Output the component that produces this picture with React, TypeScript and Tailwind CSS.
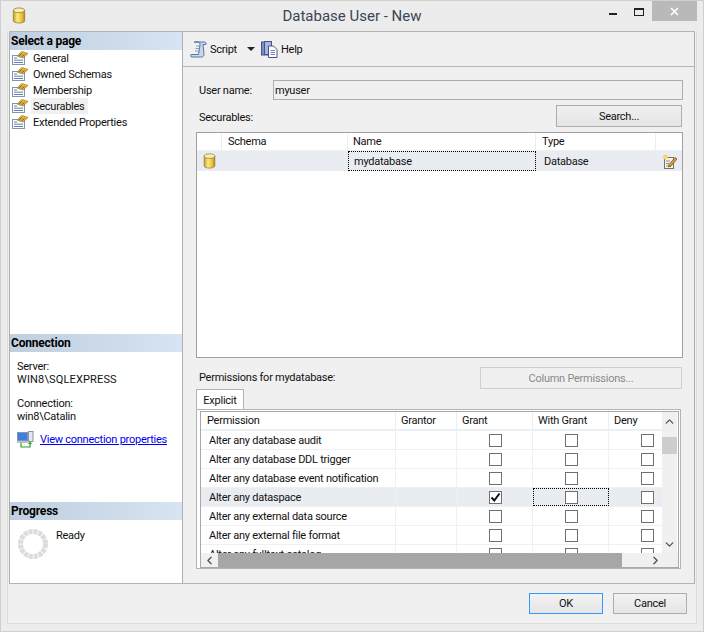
import { ChevronDown, ChevronLeft, ChevronRight, ChevronUp } from 'lucide-react'

const pages = ['General', 'Owned Schemas', 'Membership', 'Securables', 'Extended Properties']

const permissions = [
  { name: 'Alter any database audit' },
  { name: 'Alter any database DDL trigger' },
  { name: 'Alter any database event notification' },
  { name: 'Alter any dataspace', selected: true },
  { name: 'Alter any external data source' },
  { name: 'Alter any external file format' },
  { name: 'Alter any fulltext catalog' },
]

function DbIcon({ className }: { className: string }) {
  return (
    <svg viewBox="0 0 14 18" className={className}>
      <defs>
        <linearGradient id="dbBody" x1="0" x2="1" y1="0" y2="0">
          <stop offset="0" stopColor="#c99a1c" />
          <stop offset="0.35" stopColor="#fbe88a" />
          <stop offset="0.75" stopColor="#eebf35" />
          <stop offset="1" stopColor="#b58a1a" />
        </linearGradient>
      </defs>
      <path d="M1 3.500v11c0 1.400 2.700 2.500 6 2.500s6-1.100 6-2.500v-11z" fill="url(#dbBody)" stroke="#8d7a3a" strokeWidth="0.8" />
      <ellipse cx="7" cy="3.500" rx="6" ry="2.500" fill="#fbeea8" stroke="#8d7a3a" strokeWidth="0.8" />
    </svg>
  )
}

function PageIcon() {
  return (
    <svg viewBox="0 0 16 14" className="w-4 h-[14px] shrink-0">
      <rect x="0.500" y="4.500" width="12" height="9" fill="#fff" stroke="#8a93a3" />
      <path d="M2 7h3M2 9.200h9M2 11.500h9" stroke="#5c7fb8" strokeWidth="1" />
      <path d="M5 5l5-4.500 6 2-5 4.500z" fill="#e8b92f" stroke="#7a6a3a" strokeWidth="0.6" />
      <path d="M7 5l3-2.500M9.500 6l3-2.500" stroke="#4a4a3a" strokeWidth="0.8" />
    </svg>
  )
}

function ScriptIcon() {
  return (
    <svg viewBox="0 0 17 17" className="w-[17px] h-[17px]">
      <path d="M4 1h10.500c1.200 0 2 1.200 1.500 2.500h-3L14 13c0 2-1 3-2.500 3H2c-1.500 0-2-1.500-1-2.500h7.500L10 4c.2-1.500-.5-3-2-3z" fill="#c9d6ea" stroke="#4a6a9c" strokeWidth="0.9" />
      <path d="M6 5h4M5.500 7.500h4M5 10h4" stroke="#6d89b4" strokeWidth="0.8" />
    </svg>
  )
}

function HelpIcon() {
  return (
    <svg viewBox="0 0 17 17" className="w-[17px] h-[17px]">
      <rect x="0.500" y="1" width="8" height="13" fill="#7d8ec6" stroke="#44548f" />
      <rect x="3.500" y="0.500" width="7" height="13" fill="#a7b4de" stroke="#44548f" />
      <path d="M7.500 5h5l3.500 3.500v8h-8.500z" fill="#fff" stroke="#44548f" />
      <path d="M9.500 9.500h4.500M9.500 11.500h4.500M9.500 13.500h4.500" stroke="#6d7fb8" />
    </svg>
  )
}

function EditIcon() {
  return (
    <svg viewBox="0 0 15 15" className="w-[15px] h-[15px]">
      <rect x="2.500" y="3.500" width="9" height="11" fill="#f7f3e3" stroke="#77725f" />
      <path d="M4 7h4M4 9.500h3M4 12h5" stroke="#7a8fb0" />
      <circle cx="3.500" cy="3" r="2.500" fill="#f5d774" />
      <path d="M7 10.500l6-7 2 1.500-6 7-2.500 1z" fill="#d9a02c" stroke="#5c4a22" strokeWidth="0.7" />
    </svg>
  )
}

function ConnectionIcon() {
  return (
    <svg viewBox="0 0 17 17" className="w-[17px] h-[17px] shrink-0">
      <rect x="0.500" y="1.500" width="10" height="8" fill="#3f7fe0" stroke="#8a94a8" />
      <rect x="0" y="10" width="11" height="2" fill="#b9c0cc" />
      <rect x="11.500" y="0.500" width="4.500" height="10" fill="#e4e7ee" stroke="#8a94a8" />
      <path d="M4 12v4h9v-4" fill="none" stroke="#2e9e2e" strokeWidth="1.200" />
      <path d="M13 10.500l-2.200 2.500h4.400z" fill="#2e9e2e" />
    </svg>
  )
}

function Spinner() {
  return (
    <svg viewBox="0 0 30 30" className="w-[30px] h-[30px] shrink-0">
      <circle cx="15" cy="15" r="12.500" fill="none" stroke="#dcdcdc" strokeWidth="5" strokeDasharray="4.100 0.810" />
    </svg>
  )
}

function SectionHeader({ title }: { title: string }) {
  return (
    <div className="h-[18px] pl-[1px] flex items-center bg-gradient-to-r from-[#bfcfdf] to-[#d7e4f1] text-[12px] font-bold text-black leading-none tracking-[-0.2px]">
      {title}
    </div>
  )
}

function Checkbox({ checked }: { checked?: boolean }) {
  return (
    <div className="w-[13px] h-[13px] border border-[#707070] bg-white flex items-center justify-center shrink-0">
      {checked && (
        <svg viewBox="0 0 11 11" className="w-[11px] h-[11px]">
          <path d="M1.500 5.500l2.800 3L9.500 1.500" fill="none" stroke="#111" strokeWidth="2" />
        </svg>
      )}
    </div>
  )
}

function GridHeader({ label, className }: { label: string; className: string }) {
  return <div className={`border-r border-[#e8eef5] h-full flex items-center shrink-0 ${className}`}>{label}</div>
}

export default function App() {
  return (
    <div
      className="w-[704px] h-[632px] bg-[#ececec] border border-[#cfcfcf] flex flex-col overflow-hidden text-[11px] text-[#111] leading-none tracking-[-0.25px]"
      style={{ fontFamily: 'Roboto, "Liberation Sans", sans-serif' }}
    >
      {/* Title bar */}
      <div className="h-[30px] shrink-0 flex pl-[11px] text-[#3a4654]">
        <div className="w-[189px] pt-[6px]">
          <DbIcon className="w-[14px] h-[17px]" />
        </div>
        <div className="flex-1 text-center text-[15px] pt-[8px] tracking-normal">Database User - New</div>
        <div className="w-[200px] flex justify-end items-start">
          <div className="w-[8px] h-[2px] bg-[#222] mt-[12px] mr-[17px]" />
          <div className="w-[10px] h-[8px] border border-[#222] border-t-2 mt-[7px] mr-[8px]" />
          <div className="w-[45px] h-[20px] bg-[#b9b9b9] flex items-center justify-center text-white mr-[6px]">
            <svg viewBox="0 0 9 9" className="w-[9px] h-[9px]">
              <path d="M1 1l7 7M8 1l-7 7" stroke="#fff" strokeWidth="1.600" />
            </svg>
          </div>
        </div>
      </div>

      {/* Main panels */}
      <div className="mx-[6px] border-l border-r border-[#dcdcdc] flex-1 flex flex-col bg-[#f0f0f0] border-b">
        <div className="flex h-[553px] border-t border-b border-[#b4b4b4] mx-px">
          {/* Left pane */}
          <div className="w-[174px] shrink-0 bg-white border-l border-r border-[#adadb4] flex flex-col">
            <div className="h-[302px] shrink-0">
              <SectionHeader title="Select a page" />
              <div className="pl-[2px] flex flex-col">
                {pages.map((page) => (
                  <div key={page} className="h-[16px] flex items-center gap-[3px]">
                    <PageIcon />
                    <span className={page === 'Securables' ? 'bg-[#f0f0f0] px-[2px] h-[16px] flex items-center w-[57px]' : 'px-[2px]'}>{page}</span>
                  </div>
                ))}
              </div>
            </div>
            <div className="h-[168px] shrink-0">
              <SectionHeader title="Connection" />
              <div className="pl-[7px] pt-[8px] flex flex-col">
                <div className="h-[13px] flex items-center">Server:</div>
                <div className="h-[13px] flex items-center tracking-[0.15px]">WIN8\SQLEXPRESS</div>
                <div className="h-[13px] mt-[11px] flex items-center">Connection:</div>
                <div className="h-[13px] flex items-center">win8\Catalin</div>
                <div className="mt-[8px] flex items-center gap-[6px]">
                  <ConnectionIcon />
                  <span className="text-[#0000ee] underline whitespace-nowrap">View connection properties</span>
                </div>
              </div>
            </div>
            <div className="flex-1">
              <SectionHeader title="Progress" />
              <div className="pl-[8px] pt-[9px] flex gap-[8px]">
                <Spinner />
                <span className="leading-[13px]">Ready</span>
              </div>
            </div>
          </div>

          {/* Right pane */}
          <div className="flex-1 flex flex-col min-w-0 border-r border-[#adadb4]">
            <div className="h-[35px] shrink-0 border-b border-[#b4b4b4] flex items-center pl-[7px]">
              <ScriptIcon />
              <span className="ml-[3px]">Script</span>
              <div className="ml-[10px] w-0 h-0 border-l-[4px] border-r-[4px] border-t-[4px] border-l-transparent border-r-transparent border-t-[#222]" />
              <div className="ml-[6px]"><HelpIcon /></div>
              <span className="ml-[3px]">Help</span>
            </div>

            <div className="pl-[13px] flex-1 flex flex-col">
              <div className="flex items-center mt-[13px] h-[20px] pl-[3px]">
                <span className="w-[74px]">User name:</span>
                <div className="w-[410px] h-[20px] border border-[#adadad] bg-[#f0f0f0] flex items-center pl-[1px]">myuser</div>
              </div>
              <div className="flex items-center justify-between mt-[5px] h-[22px] w-[486px] pl-[3px]">
                <span className="mt-[3px]">Securables:</span>
                <div className="w-[126px] h-[22px] border border-[#adadad] bg-gradient-to-b from-[#f0f0f0] to-[#e5e5e5] flex items-center justify-center">Search...</div>
              </div>

              {/* Securables grid */}
              <div className="mt-[5px] w-[487px] h-[226px] border border-[#a0a0a0] bg-white">
                <div className="h-[17px] flex items-center">
                  <GridHeader label="" className="w-[25px]" />
                  <GridHeader label="Schema" className="w-[126px] pl-[6px]" />
                  <GridHeader label="Name" className="w-[188px] pl-[5px]" />
                  <GridHeader label="Type" className="w-[120px] pl-[6px]" />
                </div>
                <div className="h-[21px] flex items-center bg-[#e9edf1] border-t border-[#eef2f6]">
                  <div className="w-[25px] flex justify-center"><DbIcon className="w-[13px] h-[16px]" /></div>
                  <div className="w-[126px]" />
                  <div className="w-[188px] h-[20px] pl-[5px] flex items-center border border-dotted border-black">mydatabase</div>
                  <div className="w-[120px] pl-[8px]">Database</div>
                  <div className="flex-1 flex justify-center"><EditIcon /></div>
                </div>
              </div>

              <div className="flex items-center justify-between mt-[9px] h-[22px] w-[486px]">
                <span className="pl-[3px] -mt-[1px]">Permissions for mydatabase:</span>
                <div className="w-[202px] h-[22px] border border-[#d0d0d0] flex items-center justify-center text-[#8a8a8a]">Column Permissions...</div>
              </div>

              {/* Permissions tab */}
              <div className="w-[48px] h-[21px] border border-b-0 border-[#b4b4b4] bg-white flex items-center justify-center">Explicit</div>
              <div className="w-[485px] h-[160px] -mt-px border border-[#b4b4b4] bg-white pt-[1px] pl-[3px] pr-[1px] pb-[1px]">
                <div className="h-[157px] border border-[#a8a8a8] flex flex-col">
                  <div className="flex flex-1 min-h-0">
                    <div className="w-[461px] overflow-hidden">
                      <div className="h-[19px] flex items-center border-b-2 border-[#ebf0f5]">
                        <GridHeader label="Permission" className="w-[195px] pl-[6px]" />
                        <GridHeader label="Grantor" className="w-[61px] pl-[5px]" />
                        <GridHeader label="Grant" className="w-[76px] pl-[5px]" />
                        <GridHeader label="With Grant" className="w-[76px] pl-[5px]" />
                        <GridHeader label="Deny" className="w-[76px] pl-[5px] border-r-0" />
                      </div>
                      {permissions.map((row) => (
                        <div key={row.name} className={`h-[19px] w-[484px] flex items-center border-b border-[#f0f0f0] ${row.selected ? 'bg-[#e9edf1]' : ''}`}>
                          <div className="w-[195px] pl-[8px] h-full flex items-center border-r border-[#f0f0f0] shrink-0 whitespace-nowrap">{row.name}</div>
                          <div className="w-[61px] h-full border-r border-[#f0f0f0] shrink-0" />
                          <div className="w-[76px] h-full flex items-center justify-center pl-[1px] border-r border-[#f0f0f0] shrink-0">
                            <Checkbox checked={row.selected} />
                          </div>
                          <div className={`w-[76px] h-full flex items-center justify-center pl-[1px] shrink-0 ${row.selected ? 'border border-dotted border-black' : 'border-r border-[#f0f0f0]'}`}>
                            <Checkbox />
                          </div>
                          <div className="w-[76px] h-full flex items-center justify-center shrink-0">
                            <Checkbox />
                          </div>
                        </div>
                      ))}
                    </div>
                    <div className="w-[15px] bg-[#f0f0f0] flex flex-col items-center shrink-0">
                      <ChevronUp size={13} strokeWidth={2.500} className="mt-[3px] text-[#555]" />
                      <div className="w-full h-[17px] bg-[#cdcdcd] mt-[9px]" />
                      <ChevronDown size={13} strokeWidth={2.500} className="mt-auto mb-[2px] text-[#555]" />
                    </div>
                  </div>
                  <div className="h-[14px] shrink-0 bg-[#f0f0f0] flex items-center">
                    <div className="w-[17px] flex justify-center"><ChevronLeft size={13} strokeWidth={2.500} className="text-[#555]" /></div>
                    <div className="w-[404px] h-full bg-[#a6a6a6]" />
                    <div className="w-[44px] flex justify-end pr-[4px]"><ChevronRight size={13} strokeWidth={2.500} className="text-[#555]" /></div>
                  </div>
                </div>
              </div>
            </div>
          </div>
        </div>

        {/* Footer buttons */}
        <div className="flex-1 flex justify-end items-start pt-[9px] pr-[9px] gap-[10px]">
          <div className="w-[74px] h-[21px] border border-[#3399ff] bg-gradient-to-b from-[#f2f2f2] to-[#e5e5e5] flex items-center justify-center">OK</div>
          <div className="w-[74px] h-[21px] border border-[#adadad] bg-gradient-to-b from-[#f2f2f2] to-[#e5e5e5] flex items-center justify-center">Cancel</div>
        </div>
      </div>
      <div className="h-[7px] shrink-0" />
    </div>
  )
}
